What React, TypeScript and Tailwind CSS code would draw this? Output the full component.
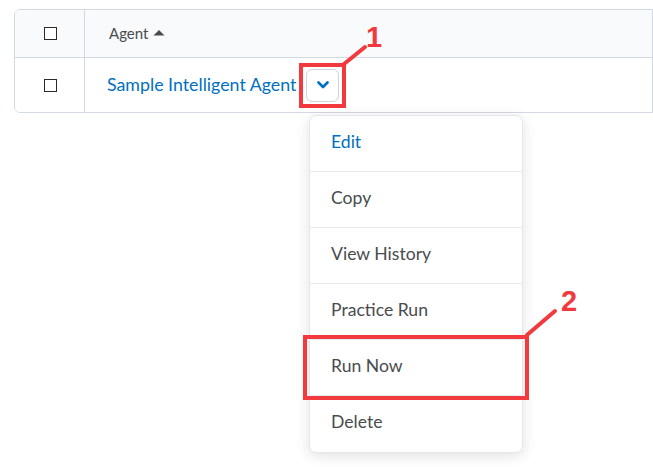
import React from "react";

const items = ["Edit", "Copy", "View History", "Practice Run", "Run Now", "Delete"];

export default function App() {
  return (
    <div
      className="relative w-[653px] h-[467px] bg-white overflow-hidden"
      style={{ fontFamily: "Lato, 'Noto Sans', sans-serif" }}
    >
      <div className="ml-[14px] mt-[9px] w-[639px] border border-[#d3d9e3] rounded-l-[6px] overflow-hidden">
        <div className="flex h-[48px] bg-[#f9fafb] border-b border-[#d3d9e3]">
          <div className="w-[70px] shrink-0 border-r border-[#d3d9e3] flex items-center justify-center">
            <div className="w-[13px] h-[13px] border-[1.5px] border-[#2a2a2a] bg-white ml-[1px]" />
          </div>
          <div className="flex items-center pl-[24px] pb-[1px] text-[15px] text-[#494c4e]">
            Agent
            <svg width="12" height="7" viewBox="0 0 12 7" className="ml-[5px] mb-[1px]">
              <path d="M0.5 6.5 L6 1 L11.5 6.5 Z" fill="#494c4e" />
            </svg>
          </div>
        </div>
        <div className="flex h-[54px] bg-white">
          <div className="w-[70px] shrink-0 border-r border-[#d3d9e3] flex items-center justify-center">
            <div className="w-[13px] h-[13px] border-[1.5px] border-[#2a2a2a] bg-white ml-[1px]" />
          </div>
          <div className="flex items-center pl-[22px]">
            <span className="text-[17.8px] text-[#006fbf] pb-[2px]">Sample Intelligent Agent</span>
            <div className="ml-[10px] shrink-0 w-[33px] h-[33px] border border-[#cdd5dc] rounded-[6px] flex items-center justify-center bg-white">
              <svg width="12" height="8" viewBox="0 0 12 8">
                <path d="M1.5 1.5 L6 6 L10.5 1.5" fill="none" stroke="#006fbf" strokeWidth="2.6" strokeLinecap="round" strokeLinejoin="round" />
              </svg>
            </div>
          </div>
        </div>
      </div>

      {/* dropdown menu */}
      <div className="absolute left-[309px] top-[115px] w-[214px] bg-white border border-[#e3e6ea] rounded-[7px] shadow-[0_3px_14px_rgba(0,0,0,0.12)] overflow-hidden">
        {items.map((it, i) => (
          <div
            key={it}
            className={`h-[56px] flex items-center pl-[21px] pb-[3px] text-[17.6px] ${i === 0 ? "text-[#006fbf]" : "text-[#494c4e]"} ${i < items.length - 1 ? "border-b border-[#e3e9f1]" : ""}`}
          >
            {it}
          </div>
        ))}
      </div>

      {/* annotations */}
      <div className="absolute left-[299px] top-[63px] w-[47px] h-[45px] border-[4px] border-[#f2393e]" />
      <svg className="absolute left-0 top-0" width="653" height="467">
        <line x1="344" y1="64" x2="365" y2="47" stroke="#f2393e" strokeWidth="4" strokeLinecap="round" />
        <line x1="527" y1="335" x2="555" y2="311" stroke="#f2393e" strokeWidth="4" strokeLinecap="round" />
      </svg>
      <div className="absolute left-[303px] top-[335px] w-[226px] h-[65px] border-[4px] border-[#f2393e]" />
      <div
        className="absolute left-[366px] top-[23px] text-[29px] font-bold text-[#f2393e] leading-none"
        style={{ fontFamily: "'Liberation Sans', Arial, sans-serif" }}
      >
        1
      </div>
      <div
        className="absolute left-[561px] top-[287px] text-[29px] font-bold text-[#f2393e] leading-none"
        style={{ fontFamily: "'Liberation Sans', Arial, sans-serif" }}
      >
        2
      </div>
    </div>
  );
}
